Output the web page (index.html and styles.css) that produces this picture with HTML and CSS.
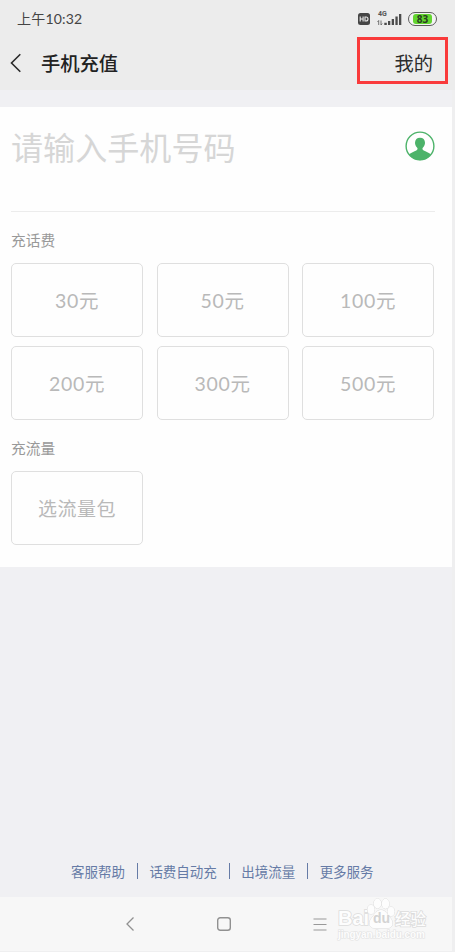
FILE: index.html
```
<!DOCTYPE html>
<html lang="zh-CN">
<head>
  <meta charset="UTF-8">
  <title>手机充值</title>
  <link rel="stylesheet" href="styles.css">
</head>
<body>
  <div class="screen">
    <header class="header">
      <div class="status">
        <span class="time">上午10:32</span>
        <svg class="hd" width="12" height="12" viewBox="0 0 12 12">
          <rect width="12" height="12" rx="2.5" fill="#454545"/>
          <path d="M2.2 3.5v5M5.1 3.5v5M2.2 6h2.9M7 4v4h1q2 0 2-2t-2-2z" fill="none" stroke="#ececec" stroke-width="1.1"/>
        </svg>
        <div class="signal">
          <span class="signal__type">4G</span>
          <svg width="25" height="14" viewBox="0 0 25 14">
            <path d="M1.7 13V8.5M.5 10l1.2-1.5M4 8.5V13M5.2 11.5L4 13" fill="none" stroke="#555" stroke-width=".8"/>
            <path d="M7.3 10.8h2.5V13H7.3zM11 9h2.3v4H11zM14.7 7H17v6h-2.3zM18.4 4.5h2.3V13h-2.3zM22 2h2.3v11H22z" fill="#4b4b4b"/>
          </svg>
        </div>
        <div class="battery"><span class="battery__level">83</span></div>
      </div>
      <div class="titlebar">
        <svg class="back" width="12" height="20" viewBox="0 0 12 20">
          <path d="M10.3 1.2L1.5 10l8.8 8.8" fill="none" stroke="#2b2b2b" stroke-width="1.6"/>
        </svg>
        <h1 class="title">手机充值</h1>
        <a class="mine">我的</a>
      </div>
    </header>

    <main class="card">
      <div class="phone">
        <span class="phone__input">请输入手机号码</span>
        <svg class="phone__contact" width="30" height="30" viewBox="0 0 30 30">
          <circle cx="15" cy="15" r="13.9" fill="#fff" stroke="#4db36a" stroke-width="1.4"/>
          <path d="M4 23.5c2-1.9 5.2-2.9 7.3-4 1.5-.8 1.6-1.9.7-2.900-1.300-1.400-2-2.900-2-4.800 0-3.300 2-5.100 5-5.100s5 1.800 5 5.100c0 1.900-.7 3.400-2 4.800-.9 1-.8 2.100.7 2.900 2.100 1.100 5.300 2.100 7.300 4-2.600 3.700-6.500 5.700-11 5.700S6.600 27.200 4 23.500z" fill="#4db36a"/>
        </svg>
      </div>
      <h2 class="label">充话费</h2>
      <div class="grid">
        <div class="option">30元</div>
        <div class="option">50元</div>
        <div class="option">100元</div>
        <div class="option">200元</div>
        <div class="option">300元</div>
        <div class="option">500元</div>
      </div>
      <h2 class="label label--data">充流量</h2>
      <div class="grid">
        <div class="option option--data">选流量包</div>
      </div>
    </main>

    <footer class="links">
      <a class="link">客服帮助</a>
      <a class="link">话费自动充</a>
      <a class="link">出境流量</a>
      <a class="link">更多服务</a>
    </footer>

    <nav class="nav">
      <svg width="10" height="16" viewBox="0 0 10 16">
        <path d="M8.5 1.5L2 8l6.5 6.5" fill="none" stroke="#919191" stroke-width="1.3"/>
      </svg>
      <svg width="16" height="16" viewBox="0 0 16 16">
        <rect x="1.7" y="1.7" width="12.6" height="12.6" rx="2.5" fill="none" stroke="#919191" stroke-width="1.4"/>
      </svg>
      <svg width="14" height="16" viewBox="0 0 14 16">
        <path d="M.5 3h13M.5 8.5h13M.5 14h13" fill="none" stroke="#999" stroke-width="1.2"/>
      </svg>
    </nav>
  </div>

  <div class="frame"></div>
  <div class="watermark">
    <div class="watermark__logo">
      <span class="watermark__bai">Bai</span>
      <span class="watermark__du">du</span>
      <svg class="watermark__paw" width="32" height="34" viewBox="0 0 32 34">
        <path d="M16 13c4.500 0 6 4 9 7.500 4 4.500 3 10.500-2 10.500H9c-5 0-6-6-2-10.500 3-3.500 4.500-7.500 9-7.500z"/>
        <ellipse cx="6" cy="12.500" rx="3.500" ry="4.500"/>
        <ellipse cx="12.500" cy="6.500" rx="3.700" ry="5"/>
        <ellipse cx="20.500" cy="6.800" rx="3.700" ry="5"/>
        <ellipse cx="26" cy="14.500" rx="3.500" ry="4.500"/>
      </svg>
      <span class="watermark__cn">经验</span>
    </div>
    <div class="watermark__url">jingyan.baidu.com</div>
  </div>
</body>
</html>
```

FILE: styles.css
```
* {
  padding: 0;
  margin: 0;
  box-sizing: border-box;
}
body {
  width: 455px;
  height: 952px;
  overflow: hidden;
  display: flex;
  background: #efeff0;
  font-family: "Noto Sans CJK SC", sans-serif;
}
.screen {
  width: 452px;
  height: 951px;
  display: flex;
  flex-direction: column;
  background: #f0f0f3;
}
.header {
  width: 455px;
  height: 90px;
  background: #ececec;
}
.status {
  height: 37px;
  padding-left: 17px;
  display: flex;
  align-items: center;
}
.time {
  width: 341px;
  font-family: Lato, "Noto Sans CJK SC", sans-serif;
  font-size: 14px;
  line-height: 20px;
  color: #444;
  letter-spacing: 0.2px;
}
.signal {
  position: relative;
  margin-left: 7px;
  height: 14px;
  display: flex;
}
.signal__type {
  position: absolute;
  left: 1px;
  top: -2px;
  font: bold 7px/8px Roboto, sans-serif;
  color: #555;
}
.battery {
  width: 29px;
  height: 14px;
  margin-left: 6px;
  padding: 1px 4px;
  border: 1.5px solid #5c5c5c;
  border-radius: 7px;
  background: #f4f4f4;
  display: flex;
}
.battery__level {
  flex: 1;
  background: #62d52f;
  border-radius: 3px;
  font: bold 10px/10px "Open Sans", sans-serif;
  text-align: center;
  color: #293c22;
}
.titlebar {
  height: 51px;
  padding: 0 22px 0 10px;
  display: flex;
  align-items: center;
}
.back {
  margin-right: 19px;
}
.title {
  font-size: 19.3px;
  font-weight: 500;
  line-height: 30px;
  color: #222;
}
.mine {
  margin-left: auto;
  font-size: 19.3px;
  line-height: 30px;
  color: #2c2c2c;
}
.card {
  height: 460px;
  margin-top: 17px;
  padding: 0 17.5px 0 11px;
  background: #fefefe;
}
.phone {
  height: 105px;
  padding-top: 24px;
  border-bottom: 1px solid #ececec;
  display: flex;
  align-items: flex-start;
  justify-content: space-between;
}
.phone__input {
  margin-top: -2px;
  font-size: 32.1px;
  line-height: 34px;
  color: #d6d6d6;
}
.label {
  height: 51px;
  padding-top: 17px;
  font-size: 14.7px;
  font-weight: 400;
  line-height: 21px;
  color: #999;
}
.grid {
  display: grid;
  grid-template-columns: repeat(3, 132px);
  grid-auto-rows: 74px;
  gap: 8.5px 13.5px;
}
.option {
  padding-bottom: 1px;
  border: 1px solid #dfdfdf;
  border-radius: 5px;
  display: flex;
  align-items: center;
  justify-content: center;
  font-family: Lato, "Noto Sans CJK SC", sans-serif;
  font-size: 19.5px;
  letter-spacing: 0.7px;
  color: #b9b9b9;
}
.option--data {
  font-size: 19px;
  letter-spacing: 0.5px;
}
.links {
  margin-top: auto;
  height: 52px;
  padding: 0 0 1px 71px;
  display: flex;
  align-items: center;
}
.link {
  font-size: 13.5px;
  line-height: 16px;
  color: #667ba6;
}
.link + .link {
  margin-left: 11.7px;
  padding-left: 11.7px;
  border-left: 1.5px solid #667ba6;
}
.nav {
  height: 54px;
  padding: 0 125px;
  background: #f7f7f7;
  display: flex;
  align-items: center;
  justify-content: space-between;
}
/* red box around the "mine" link */
.frame {
  position: absolute;
  left: 357px;
  top: 37px;
  width: 91px;
  height: 47px;
  border: 3px solid #f93a3a;
}
.watermark {
  position: absolute;
  left: 338px;
  top: 897px;
  width: 92px;
  font-family: "Liberation Sans", sans-serif;
  font-weight: bold;
  color: #fdfdfd;
  -webkit-text-stroke: 1.6px #dcdcdc;
  paint-order: stroke;
}
.watermark__logo {
  position: relative;
  height: 31px;
  display: flex;
  align-items: flex-end;
}
.watermark__bai {
  width: 35px;
  font-size: 20px;
  line-height: 20px;
}
.watermark__du {
  z-index: 1;
  width: 22px;
  font-size: 14px;
  line-height: 19px;
  color: #d4d4d4;
  -webkit-text-stroke: 0;
}
.watermark__paw {
  position: absolute;
  left: 27px;
  top: 0;
  fill: #fdfdfd;
  stroke: #dedede;
}
.watermark__cn {
  font: 500 15.5px/20px "Noto Sans CJK SC", sans-serif;
}
.watermark__url {
  font-size: 10px;
  line-height: 13px;
  letter-spacing: -0.05px;
  -webkit-text-stroke: 1.2px #e2e2e2;
}
```
